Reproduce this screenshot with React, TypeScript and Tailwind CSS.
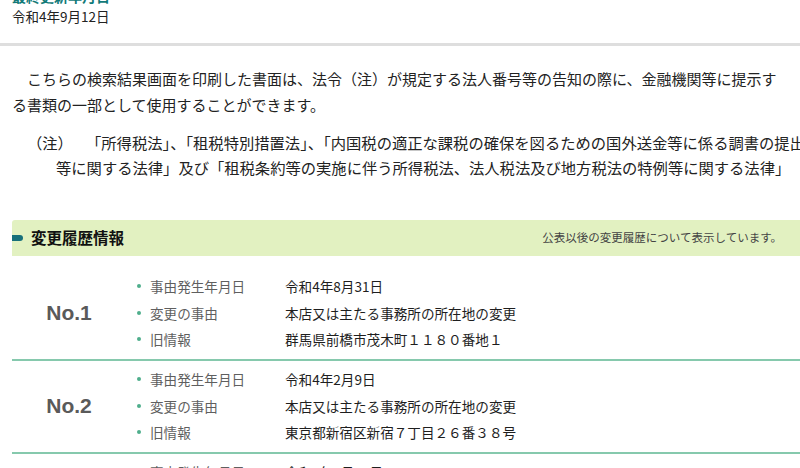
import React from "react";

type Item = { label: string; value: string };
type Row = { no: string; items: Item[] };

const rows: Row[] = [
  {
    no: "No.1",
    items: [
      { label: "事由発生年月日", value: "令和4年8月31日" },
      { label: "変更の事由", value: "本店又は主たる事務所の所在地の変更" },
      { label: "旧情報", value: "群馬県前橋市茂木町１１８０番地１" },
    ],
  },
  {
    no: "No.2",
    items: [
      { label: "事由発生年月日", value: "令和4年2月9日" },
      { label: "変更の事由", value: "本店又は主たる事務所の所在地の変更" },
      { label: "旧情報", value: "東京都新宿区新宿７丁目２６番３８号" },
    ],
  },
  {
    no: "No.3",
    items: [
      { label: "事由発生年月日", value: "令和3年9月27日" },
      { label: "変更の事由", value: "本店又は主たる事務所の所在地の変更" },
      { label: "旧情報", value: "東京都新宿区新宿７丁目２６番３８号" },
    ],
  },
];

function HistoryRow({ row, first }: { row: Row; first?: boolean }) {
  return (
    <div
      className={`flex border-b-2 border-[#86c9ad] pt-[5px] pb-[6.5px] ${
        first ? "mt-[12px]" : ""
      }`}
    >
      <div className="w-[114px] shrink-0 flex items-center justify-center text-[21px] font-bold text-[#5a5a5a] [font-family:'Liberation_Sans',Arial,sans-serif]">
        {row.no}
      </div>
      <div className="flex flex-col">
        {row.items.map((it) => (
          <div key={it.label} className="flex items-center leading-[26.5px] whitespace-nowrap">
            <span className="ml-[11px] w-[4px] h-[4px] rounded-full bg-[#4fae8c] shrink-0" />
            <span className="ml-[9px] w-[135px] shrink-0 text-[13.6px] text-[#5f5f5f]">{it.label}</span>
            <span className="text-[13.6px] text-[#1e1e1e]">{it.value}</span>
          </div>
        ))}
      </div>
    </div>
  );
}

export default function App() {
  return (
    <div className="w-[800px] h-[468px] overflow-hidden bg-white text-[#222] [font-family:'Noto_Sans_CJK_JP','Noto_Sans',sans-serif]">
      <div className="w-[812px]">
        <div className="px-[12px]">
          <div className="mt-[-14px] text-[14px] leading-[20px] font-bold text-[#127a78]">最終更新年月日</div>
          <div className="text-[13.5px] leading-[20px]">令和4年9月12日</div>
        </div>
        <div className="mt-[17px] h-[3px] bg-[#dedede]" />

        <div className="pl-[12px] mt-[20px] leading-[26px] whitespace-nowrap">
          <p className="indent-[15px] text-[15px]">
            こちらの検索結果画面を印刷した書面は、法令（注）が規定する法人番号等の告知の際に、金融機関等に提示す
            <br />
            る書類の一部として使用することができます。
          </p>
          <p className="mt-[11.5px] pl-[44px] indent-[-29px] text-[15.3px] leading-[25px]">
            <span className="inline-block indent-0 w-[59px]">（注）</span>
            「所得税法」、「租税特別措置法」、「内国税の適正な課税の確保を図るための国外送金等に係る調書の提出
            <br />
            等に関する法律」及び「租税条約等の実施に伴う所得税法、法人税法及び地方税法の特例等に関する法律」
          </p>
        </div>

        <div className="ml-[12px] mt-[40.5px]">
          <div className="h-[36px] flex items-center bg-[#e2f1c1] rounded-tl-[3px] pr-[30px]">
            <span className="w-[11px] h-[6px] rounded-r-full bg-[#17707a] shrink-0" />
            <span className="ml-[8px] text-[15.5px] font-bold text-[#111]">変更履歴情報</span>
            <span className="ml-auto text-[11.5px] text-[#444]">公表以後の変更履歴について表示しています。</span>
          </div>
          {rows.map((r, i) => (
            <HistoryRow key={r.no} row={r} first={i === 0} />
          ))}
        </div>
      </div>
    </div>
  );
}
